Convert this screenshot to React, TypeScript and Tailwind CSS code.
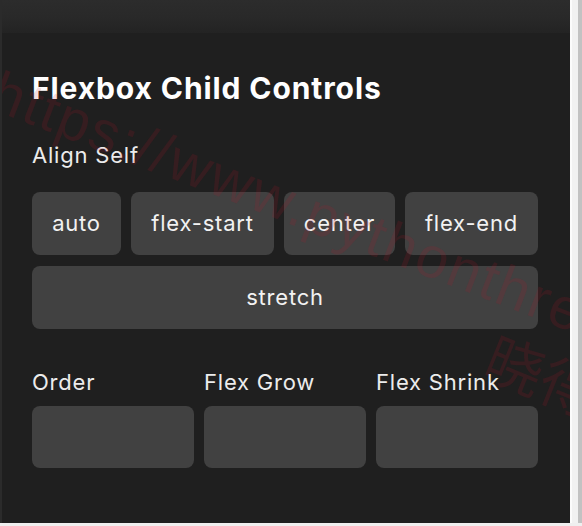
import React from "react";

const alignOptions = [
  { label: "auto", w: "w-[89px]" },
  { label: "flex-start", w: "w-[143px]" },
  { label: "center", w: "w-[111px]" },
  { label: "flex-end", w: "w-[133px]" },
];

const fields = ["Order", "Flex Grow", "Flex Shrink"];

export default function App() {
  return (
    <div className="w-[582px] h-[526px] flex flex-col bg-[#f2f2f2] overflow-hidden font-['Inter','Liberation_Sans',sans-serif]">
      <div className="flex h-[523px]">
        <div className="relative w-[570px] h-full bg-[#1f1f1f] border-l-2 border-[#2b2b2b] overflow-hidden">
          <div className="h-[33px] bg-gradient-to-b from-[#2c2c2c] via-[#292929] to-[#232323]" />

          <div className="pl-[30px] pr-[30px] pt-[37px]">
            <h1 className="text-[30px] leading-[36px] font-bold text-white tracking-[0.9px]">
              Flexbox Child Controls
            </h1>
            <div className="mt-[35px] text-[22px] leading-[28px] tracking-[0.8px] text-[#ececec]">Align Self</div>

            <div className="mt-[23px] flex gap-[10px]">
              {alignOptions.map((o) => (
                <button
                  key={o.label}
                  className={`${o.w} h-[63px] rounded-[8px] bg-[#414141] text-[22px] tracking-[0.8px] text-[#f2f2f2]`}
                >
                  {o.label}
                </button>
              ))}
            </div>
            <button className="mt-[11px] w-[506px] h-[63px] rounded-[8px] bg-[#414141] text-[22px] tracking-[0.8px] text-[#f2f2f2]">
              stretch
            </button>

            <div className="mt-[39px] grid grid-cols-3 gap-[10px] w-[506px]">
              {fields.map((f) => (
                <div key={f} className="flex flex-col gap-[10px]">
                  <span className="text-[22px] leading-[28px] tracking-[0.8px] text-[#ececec]">{f}</span>
                  <div className="h-[62px] rounded-[8px] bg-[#414141]" />
                </div>
              ))}
            </div>
          </div>

          {/* watermark */}
          <span className="absolute left-[8px] top-[48px] origin-top-left rotate-[21deg] whitespace-nowrap text-[58px] tracking-[2px] text-[rgba(190,20,40,0.15)] font-['Liberation_Sans',sans-serif] pointer-events-none">
            https://www.pythonthree.com
          </span>
          <span className="absolute left-[504px] top-[312px] origin-top-left rotate-[22deg] whitespace-nowrap text-[58px] text-[rgba(190,20,40,0.15)] font-['Noto_Sans_CJK_SC',sans-serif] pointer-events-none">
            晓得博客
          </span>
        </div>
        <div className="flex">
          <div className="w-[2px] bg-[#fbfbfb]" />
          <div className="w-[6px] bg-[#f1f1f1]" />
          <div className="w-[4px] bg-[#c2c2c2]" />
        </div>
      </div>
      <div className="h-[3px] bg-[#efefef]" />
    </div>
  );
}
